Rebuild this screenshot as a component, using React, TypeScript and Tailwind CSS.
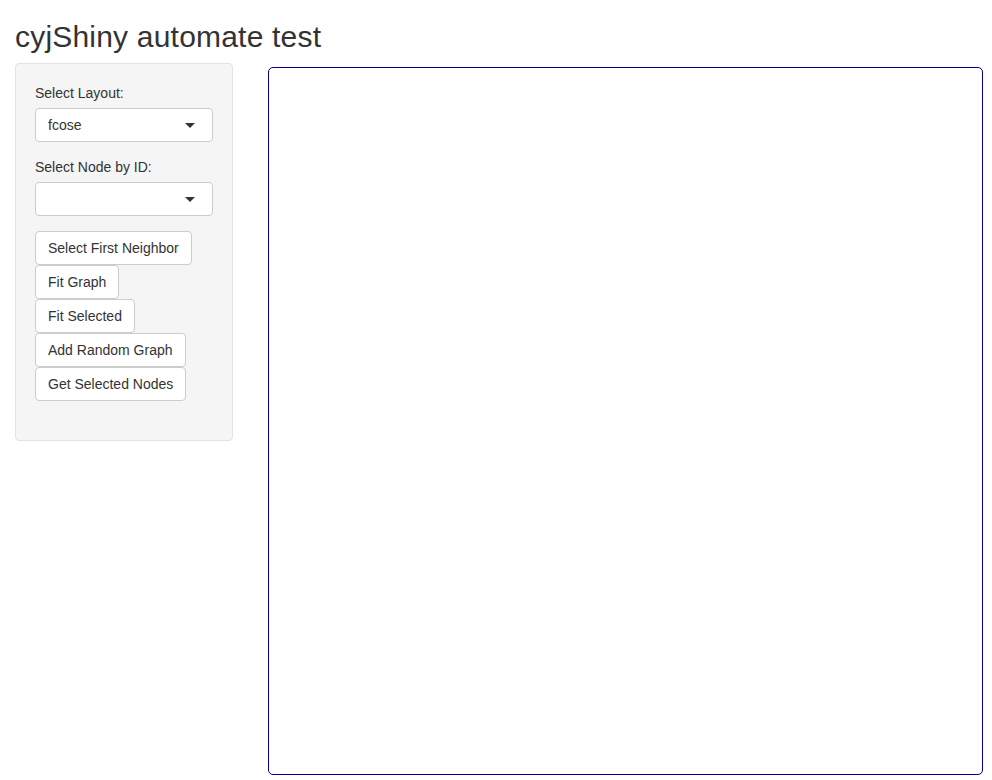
import type {FunctionComponent} from 'react';

const Caret: FunctionComponent = () => (
    <svg width="10" height="5" viewBox="0 0 10 5" className="shrink-0">
        <path d="M0 0 L10 0 L5 5 Z" fill="#333" />
    </svg>
);

const SelectBox: FunctionComponent<{value?: string}> = ({value}) => (
    <div className="flex items-center justify-between h-[34px] w-full bg-white border border-[#ccc] rounded-[4px] pl-[12px] pr-[17px] text-[14px] text-[#333]">
        <span>{value ?? ''}</span>
        <Caret />
    </div>
);

const buttons = [
    'Select First Neighbor',
    'Fit Graph',
    'Fit Selected',
    'Add Random Graph',
    'Get Selected Nodes',
];

export default function App() {
    return (
        <div
            className="min-h-[780px] bg-white text-[#333] pl-[15px] pr-[9px]"
            style={{fontFamily: '"Liberation Sans", Arial, Helvetica, sans-serif'}}
        >
            <h2 className="mt-[20px] mb-[10px] text-[30px] leading-[33px] font-normal tracking-[0.2px]">
                cyjShiny automate test
            </h2>

            <div className="flex items-start">
                <div className="w-[218px] shrink-0 bg-[#f5f5f5] border border-[#e3e3e3] rounded-[4px] pt-[19px] px-[19px] pb-[39px] text-[14px]">
                    <div className="mb-[15px]">
                        <div className="leading-[20px] mb-[5px]">Select Layout:</div>
                        <SelectBox value="fcose" />
                    </div>
                    <div className="mb-[15px]">
                        <div className="leading-[20px] mb-[5px]">Select Node by ID:</div>
                        <SelectBox />
                    </div>
                    <div className="flex flex-col items-start">
                        {buttons.map(label => (
                            <button
                                key={label}
                                type="button"
                                className="h-[34px] px-[12px] bg-white border border-[#ccc] rounded-[4px] text-[14px] leading-[20px] text-[#333]"
                            >
                                {label}
                            </button>
                        ))}
                    </div>
                </div>

                <div className="ml-[35px] mt-[4px] w-[715px] h-[708px] shrink-0 border border-[#00008b] rounded-[5px]" />
            </div>
        </div>
    );
}
